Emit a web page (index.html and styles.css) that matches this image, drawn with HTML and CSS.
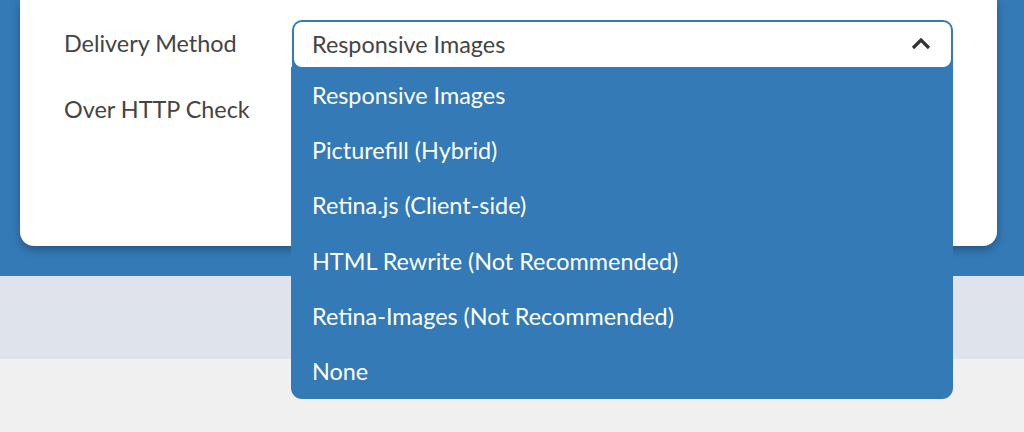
FILE: index.html
```html
<!DOCTYPE html>
<html>
<head>
<meta charset="utf-8">
<link rel="stylesheet" href="styles.css">
</head>
<body>
<div class="hero">
  <div class="card">
    <div class="row">
      <div class="label">Delivery Method</div>
      <div class="select">
        <div class="select-box">
          <span>Responsive Images</span>
          <svg class="chevron" width="20" height="13" viewBox="0 0 20 13"><path d="M2 11 L10 3 L18 11" fill="none" stroke="#333" stroke-width="3.2"/></svg>
        </div>
        <ul class="menu">
          <li>Responsive Images</li>
          <li>Picturefill (Hybrid)</li>
          <li>Retina.js (Client-side)</li>
          <li>HTML Rewrite (Not Recommended)</li>
          <li>Retina-Images (Not Recommended)</li>
          <li>None</li>
        </ul>
      </div>
    </div>
    <div class="row">
      <div class="label">Over HTTP Check</div>
    </div>
  </div>
</div>
<div class="band"></div>
</body>
</html>
```
FILE: styles.css
```css
html, body {
  margin: 0;
  padding: 0;
}
body {
  background: #f0f0f0;
  font-family: Lato, "Open Sans", sans-serif;
  height: 432px;
  overflow: hidden;
}
.hero {
  background: #337ab6;
  height: 276px;
  padding: 0 27px 0 20px;
  box-sizing: border-box;
}
.card {
  background: #fff;
  height: 246px;
  border-radius: 0 0 14px 14px;
  box-shadow: 0 4px 8px rgba(0, 0, 0, 0.28);
  padding: 20px 44px 0 44px;
  box-sizing: border-box;
  display: flex;
  flex-direction: column;
  gap: 19px;
}
.row {
  display: flex;
  align-items: center;
  min-height: 47px;
}
.label {
  width: 228px;
  font-size: 23.4px;
  color: #444;
  padding-bottom: 2px;
}
.select {
  position: relative;
  flex: 1;
  background: #337ab6;
  border-radius: 10px 10px 0 0;
  padding: 2px 2px 0 2px;
  height: 47px;
  box-sizing: border-box;
}
.select-box {
  background: #fff;
  height: 45px;
  box-sizing: border-box;
  border-radius: 8px;
  display: flex;
  align-items: center;
  justify-content: space-between;
  padding: 0 20px 2px 18px;
  font-size: 23.4px;
  color: #444;
}
.chevron {
  display: block;
}
.menu {
  position: absolute;
  top: 100%;
  left: -1px;
  right: 0;
  margin: 0;
  padding: 0;
  list-style: none;
  background: #337ab6;
  border-radius: 0 0 11px 11px;
}
.menu li {
  height: 55.3px;
  display: flex;
  align-items: center;
  padding-left: 21px;
  font-size: 23.4px;
  color: #fff;
}
.band {
  background: #dfe3eb;
  height: 83px;
}
```
